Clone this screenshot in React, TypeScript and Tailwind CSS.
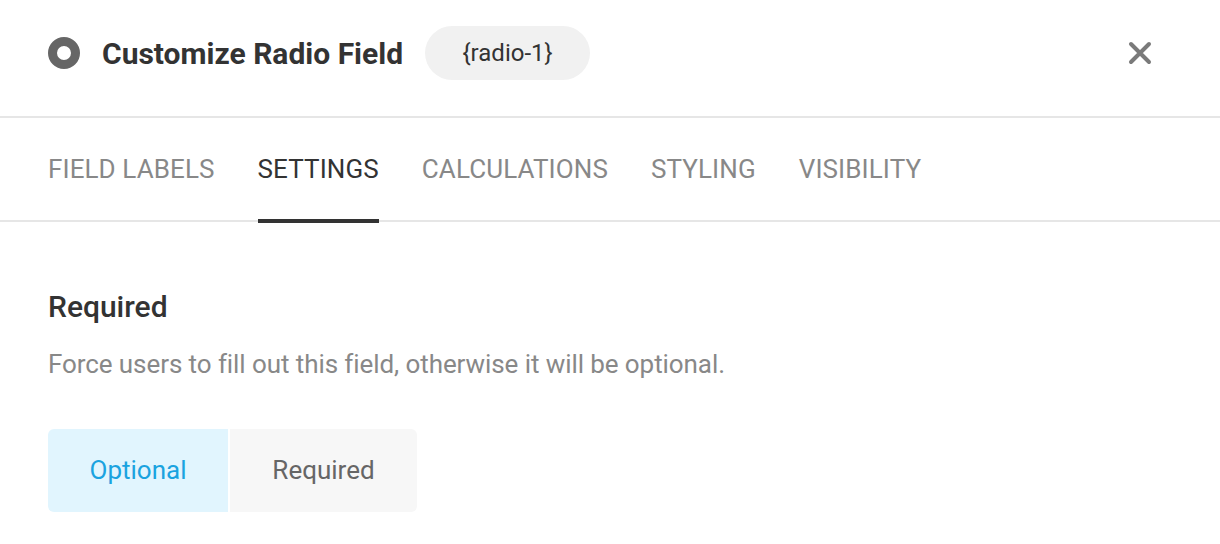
import { useState } from "react";

const tabs = ["FIELD LABELS", "SETTINGS", "CALCULATIONS", "STYLING", "VISIBILITY"];

const RadioIcon = () => (
  <svg width="32" height="32" viewBox="0 0 32 32">
    <circle cx="16" cy="16" r="11.5" fill="none" stroke="#666" strokeWidth="9" />
  </svg>
);

const CloseIcon = () => (
  <svg width="24" height="24" viewBox="0 0 24 24">
    <path d="M3 3 L21 21 M21 3 L3 21" stroke="#7a7a7a" strokeWidth="4" strokeLinecap="round" />
  </svg>
);

export default function App() {
  const [active, setActive] = useState("SETTINGS");
  const [required, setRequired] = useState(false);

  return (
    <div className="w-[1220px] h-[544px] bg-white font-['Roboto',sans-serif] overflow-hidden">
      {/* header */}
      <div className="flex items-start h-[118px] border-b-2 border-[#e6e6e6] pl-12 pr-[68px] pt-[26px]">
        <div className="flex items-center h-[54px] gap-[22px]">
          <RadioIcon />
          <h1 className="text-[30px] font-bold text-[#333]">Customize Radio Field</h1>
          <span className="h-[54px] w-[165px] justify-center flex items-center rounded-full bg-[#f1f1f1] text-[24px] text-[#333]">
            {"{radio-1}"}
          </span>
        </div>
        <button className="ml-auto h-[54px] flex items-center">
          <CloseIcon />
        </button>
      </div>

      {/* tabs */}
      <div className="flex gap-[43px] px-12 h-[104px] border-b-2 border-[#e6e6e6]">
        {tabs.map((t) => (
          <button
            key={t}
            onClick={() => setActive(t)}
            className={`relative h-full flex items-center text-[26px] tracking-[0.1px] ${
              active === t ? "text-[#333]" : "text-[#888]"
            }`}
          >
            {t}
            {active === t && <span className="absolute left-0 right-0 -bottom-[3px] h-1 bg-[#333]" />}
          </button>
        ))}
      </div>

      {/* settings */}
      <div className="px-12 pt-[67px]">
        <h2 className="text-[30px] font-medium text-[#333] leading-[36px]">Required</h2>
        <p className="mt-[23px] text-[26px] text-[#888] leading-[32px] tracking-[-0.08px]">
          Force users to fill out this field, otherwise it will be optional.
        </p>
        <div className="mt-[49px] flex gap-[2px] w-fit rounded-md overflow-hidden">
          <button
            onClick={() => setRequired(false)}
            className={`w-[180px] h-[83px] text-[26px] ${
              !required ? "bg-[#e1f5fe] text-[#1aa3e0]" : "bg-[#f7f7f7] text-[#666]"
            }`}
          >
            Optional
          </button>
          <button
            onClick={() => setRequired(true)}
            className={`w-[187px] h-[83px] text-[26px] ${
              required ? "bg-[#e1f5fe] text-[#1aa3e0]" : "bg-[#f7f7f7] text-[#666]"
            }`}
          >
            Required
          </button>
        </div>
      </div>
    </div>
  );
}
